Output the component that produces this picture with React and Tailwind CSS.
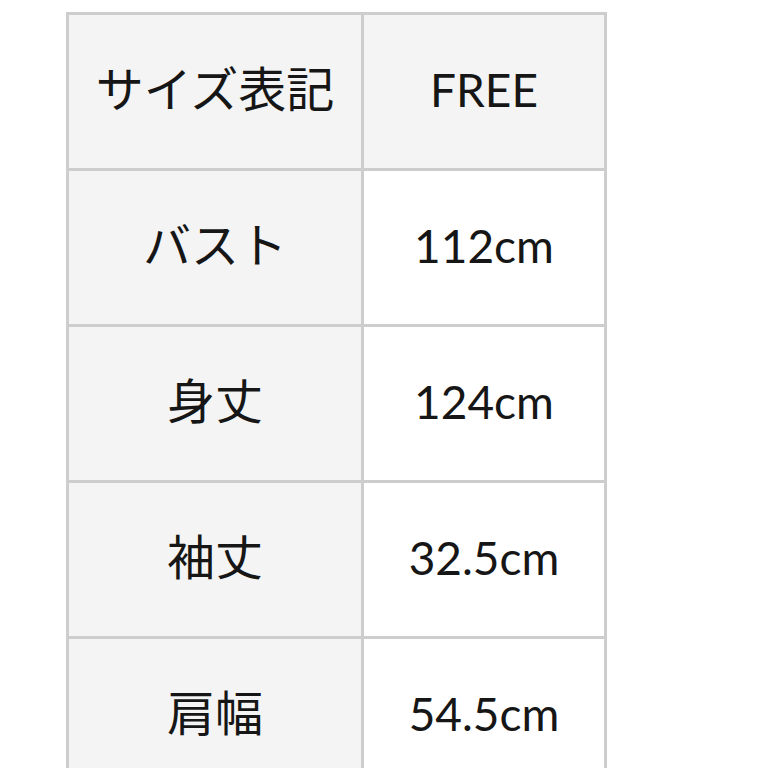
import React from 'react'

const rows = [
  { label: 'サイズ表記', value: 'FREE', head: true },
  { label: 'バスト', value: '112cm' },
  { label: '身丈', value: '124cm' },
  { label: '袖丈', value: '32.5cm' },
  { label: '肩幅', value: '54.5cm' },
]

const App = () => {
  return (
    <div className="h-screen w-screen overflow-hidden bg-white">
      <div
        className="ml-[66px] mt-[12px] grid w-[541px] grid-cols-[292px_240px] auto-rows-[153px] gap-[3px] bg-[#cdcdcd] p-[3px] text-[46px] text-[#161616]"
        style={{ fontFamily: 'Lato, "Noto Sans CJK JP", sans-serif' }}
      >
        {rows.map((row, i) => (
          <React.Fragment key={i}>
            <div className="flex items-center justify-center bg-[#f4f4f4] pb-[5px] text-[48px]">{row.label}</div>
            <div className={`flex items-center justify-center pb-[4px] ${row.head ? 'bg-[#f4f4f4]' : 'bg-white'}`}>
              {row.value}
            </div>
          </React.Fragment>
        ))}
      </div>
    </div>
  )
}

export default App
